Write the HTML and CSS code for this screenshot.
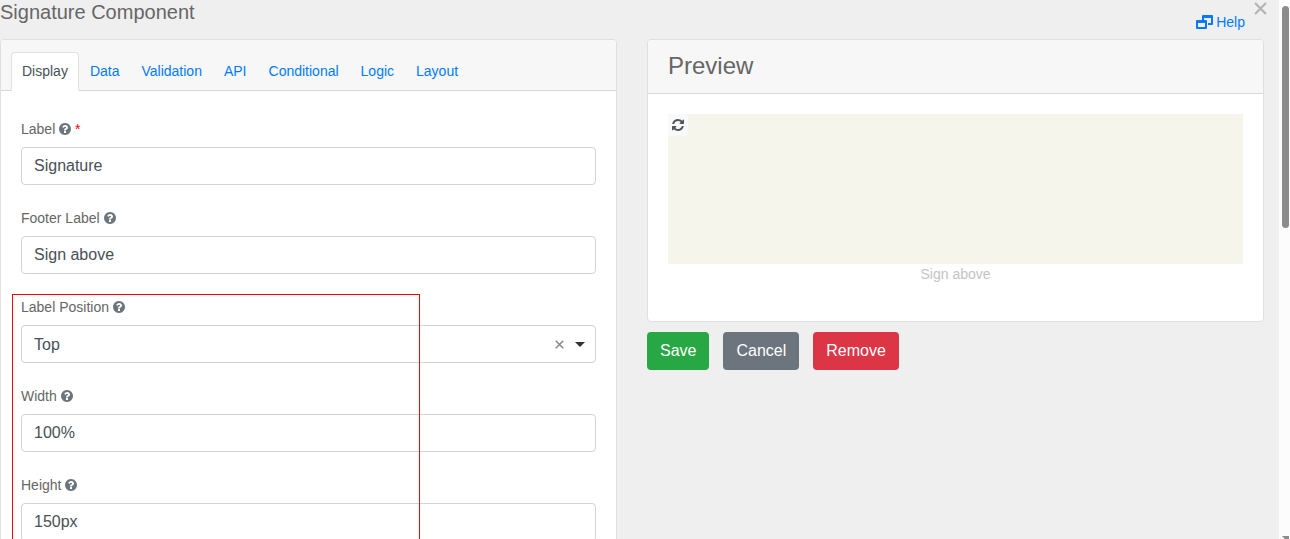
FILE: index.html
```
<!DOCTYPE html>
<html lang="en">
<head>
  <meta charset="UTF-8" />
  <meta name="viewport" content="width=device-width, initial-scale=1.0"/>
  <title>Signature Component</title>
  <link rel="stylesheet" href="styles.css">
</head>

<body>
  <!-- shared icon shapes -->
  <svg class="icon-defs" aria-hidden="true">
    <symbol id="icon-question" viewBox="128 128 1536 1536">
      <path d="M1024 1376v-192q0-14-9-23t-23-9h-192q-14 0-23 9t-9 23v192q0 14 9 23t23 9h192q14 0 23-9t9-23zm256-672q0-88-55.500-163t-138.500-116-170-41q-243 0-371 213-15 24 8 42l132 100q7 6 19 6 16 0 25-12 53-68 86-92 34-24 86-24 48 0 85.500 26t37.500 59q0 38-20 61t-68 45q-63 28-115.500 86.500t-52.500 125.500v36q0 14 9 23t23 9h192q14 0 23-9t9-23q0-19 21.500-49.500t54.500-49.500q32-18 49-28.500t46-35 44.500-48 28-60.500 12.500-81zm384 192q0 209-103 385.500t-279.500 279.500-385.500 103-385.500-103-279.500-279.500-103-385.500 103-385.500 279.500-279.500 385.500-103 385.500 103 279.500 279.500 103 385.500z"/>
    </symbol>
    <symbol id="icon-refresh" viewBox="128 128 1536 1536">
      <path d="M1639 1056q0 5-1 7-64 268-268 434.500t-478 166.500q-146 0-282.500-55t-243.500-157l-129 129q-19 19-45 19t-45-19-19-45v-448q0-26 19-45t45-19h448q26 0 45 19t19 45-19 45l-137 137q71 66 161 102t187 36q134 0 250-65t186-179q11-17 53-117 8-23 30-23h192q13 0 22.500 9.500t9.500 22.500zm25-800v448q0 26-19 45t-45 19h-448q-26 0-45-19t-19-45 19-45l138-138q-148-137-349-137-134 0-250 65t-186 179q-11 17-53 117-8 23-30 23h-199q-13 0-22.500-9.500t-9.500-22.500v-7q65-268 270-434.500t480-166.500q146 0 284 55.500t245 156.500l130-129q19-19 45-19t45 19 19 45z"/>
    </symbol>
    <symbol id="icon-cross" viewBox="0 0 12 12">
      <path d="M1 1L11 11M11 1L1 11"/>
    </symbol>
  </svg>

  <div class="dialog">
    <main class="content">
      <button class="close" type="button" aria-label="Close"><svg><use href="#icon-cross"/></svg></button>

      <header class="top">
        <h1 class="title">Signature Component</h1>
        <a class="help" href="#">
          <svg viewBox="0 0 17 14">
            <path fill-rule="evenodd" d="M7 0h9q1 0 1 1v8q0 1-1 1h-4V8h3V3H8v2H6V1q0-1 1-1z"/>
            <path fill-rule="evenodd" d="M1 5h9q1 0 1 1v7q0 1-1 1H1q-1 0-1-1V6q0-1 1-1zM2 8v4h7V8z"/>
          </svg>
          Help
        </a>
      </header>

      <div class="columns">
        <section class="card">
          <nav class="tabs">
            <a class="tab active" href="#">Display</a>
            <a class="tab" href="#">Data</a>
            <a class="tab" href="#">Validation</a>
            <a class="tab" href="#">API</a>
            <a class="tab" href="#">Conditional</a>
            <a class="tab" href="#">Logic</a>
            <a class="tab" href="#">Layout</a>
          </nav>

          <form class="fields">
            <div class="field">
              <label for="label">Label <svg class="tip"><use href="#icon-question"/></svg> <span class="required">*</span></label>
              <input id="label" type="text" value="Signature">
            </div>
            <div class="field">
              <label for="footer">Footer Label <svg class="tip"><use href="#icon-question"/></svg></label>
              <input id="footer" type="text" value="Sign above">
            </div>

            <div class="marked">
              <div class="field">
                <label for="position">Label Position <svg class="tip"><use href="#icon-question"/></svg></label>
                <div class="select">
                  <select id="position">
                    <option>Top</option>
                  </select>
                  <div class="select-tools">
                    <button class="clear" type="button" aria-label="Clear"><svg><use href="#icon-cross"/></svg></button>
                    <span class="caret"></span>
                  </div>
                </div>
              </div>
              <div class="field">
                <label for="width">Width <svg class="tip"><use href="#icon-question"/></svg></label>
                <input id="width" type="text" value="100%">
              </div>
              <div class="field">
                <label for="height">Height <svg class="tip"><use href="#icon-question"/></svg></label>
                <input id="height" type="text" value="150px">
              </div>
              <div class="outline"></div>
            </div>
          </form>
        </section>

        <section class="side">
          <div class="card">
            <h2 class="card-title">Preview</h2>
            <div class="preview">
              <div class="pad">
                <button class="refresh" type="button" aria-label="Clear signature"><svg><use href="#icon-refresh"/></svg></button>
              </div>
              <div class="pad-footer">Sign above</div>
            </div>
          </div>
          <div class="actions">
            <button class="btn save" type="button">Save</button>
            <button class="btn cancel" type="button">Cancel</button>
            <button class="btn remove" type="button">Remove</button>
          </div>
        </section>
      </div>
    </main>

    <div class="scrollbar">
      <div class="thumb"></div>
      <div class="arrow"></div>
    </div>
  </div>
</body>
</html>
```

FILE: styles.css
```
* {
  box-sizing: border-box;
}

body {
  margin: 0;
  background: #efefef;
  color: #666;
  font-family: "Liberation Sans", Arial, sans-serif;
  font-size: 14px;
  line-height: 21px;
}

a {
  color: #007bff;
  text-decoration: none;
}

button {
  font-family: inherit;
  cursor: pointer;
}

.icon-defs {
  display: none;
}

.dialog {
  display: flex;
  height: 100vh;
  overflow: hidden;
}

.content {
  position: relative;
  flex: 1;
  padding-right: 15px;
}

.top {
  display: flex;
  justify-content: space-between;
  height: 39px;
  padding-right: 19px;
}

.title {
  margin: 0;
  font-size: 20px;
  font-weight: normal;
  line-height: 24px;
}

.help {
  display: flex;
  align-items: center;
  gap: 3px;
  padding-top: 5px;
}

.help svg {
  width: 17px;
  height: 14px;
  fill: #007bff;
}

.close {
  position: absolute;
  top: 2px;
  right: 12px;
  padding: 0;
  border: none;
  background: none;
}

.close svg {
  display: block;
  width: 13px;
  height: 13px;
  stroke: #b3b3b3;
  stroke-width: 2;
}

.columns {
  display: grid;
  grid-template-columns: 1fr 1fr;
  gap: 30px;
}

.card {
  background: #fff;
  border: 1px solid #dfdfdf;
  border-radius: 4px;
}

/* tabs */
.tabs {
  display: flex;
  padding: 12px 10px 0;
  background: #f7f7f7;
  border-bottom: 1px solid #d8d8d8;
  border-radius: 3px 3px 0 0;
}

.tab {
  margin-bottom: -1px;
  padding: 8px 10px;
  border: 1px solid transparent;
  border-radius: 4px 4px 0 0;
}

.tab.active {
  background: #fff;
  border-color: #dee2e6 #dee2e6 #fff;
  color: #495057;
}

/* form */
.fields {
  padding: 28px 20px 20px;
}

.field {
  margin-bottom: 23px;
}

.field label {
  display: block;
  margin-bottom: 7px;
}

.tip {
  width: 12px;
  height: 12px;
  fill: #6c757d;
  vertical-align: -1px;
}

.required {
  color: #eb0000;
}

.field input,
.field select {
  display: block;
  width: 100%;
  height: 38px;
  padding: 0 12px;
  background: #fff;
  border: 1px solid #ced4da;
  border-radius: 4px;
  color: #495057;
  font-family: inherit;
  font-size: 16px;
}

.field select {
  appearance: none;
}

.select {
  position: relative;
}

.select-tools {
  position: absolute;
  top: 0;
  bottom: 0;
  right: 11px;
  display: flex;
  align-items: center;
  gap: 11px;
}

.clear {
  padding: 0;
  border: none;
  background: none;
}

.clear svg {
  display: block;
  width: 9px;
  height: 9px;
  stroke: #888;
  stroke-width: 2;
}

.caret {
  border: 5px solid transparent;
  border-top-color: #333;
  border-bottom: none;
}

/* red frame round the size and position settings */
.marked {
  position: relative;
}

.outline {
  position: absolute;
  top: -3px;
  left: -9px;
  width: 408px;
  height: 300px;
  border: 1px solid #f00;
  pointer-events: none;
}

/* preview */
.card-title {
  margin: 0;
  padding: 11px 20px 13px;
  background: #f7f7f7;
  border-bottom: 1px solid #d8d8d8;
  border-radius: 3px 3px 0 0;
  font-size: 24px;
  font-weight: normal;
  line-height: 29px;
}

.preview {
  padding: 20px 20px 36px;
}

.pad {
  height: 150px;
  background: #f5f5eb;
}

.refresh {
  padding: 5px 4px;
  border: none;
  border-radius: 3px;
  background: #f8f9fa;
}

.refresh svg {
  display: block;
  width: 12px;
  height: 12px;
  fill: #555;
}

.pad-footer {
  color: #c3c3c3;
  text-align: center;
}

.actions {
  display: flex;
  gap: 14px;
  margin-top: 10px;
}

.btn {
  height: 38px;
  padding: 0 13px;
  border: none;
  border-radius: 4px;
  color: #fff;
  font-size: 16px;
}

.save {
  background: #28a745;
}

.cancel {
  background: #6c757d;
}

.remove {
  background: #dc3545;
}

/* scrollbar */
.scrollbar {
  display: flex;
  flex-direction: column;
  justify-content: space-between;
  width: 11px;
  padding: 6px 1px 0 3px;
  background: #fcfcfc;
}

.thumb {
  height: 222px;
  background: #8b8b8b;
  border-radius: 4px;
}

.arrow {
  height: 3px;
  background: #8b8b8b;
  clip-path: polygon(0 0, 100% 0, 100% 100%, 40% 100%);
}
```
